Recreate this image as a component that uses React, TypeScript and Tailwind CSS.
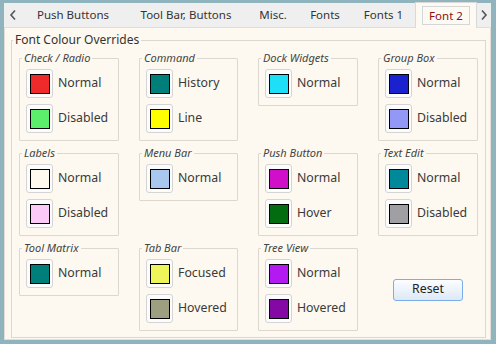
import React from "react";

type Item = { swatch: string; label: string };
type Box = { title: string; items: Item[] };

const rows: (Box | "reset")[][] = [
  [
    { title: "Check / Radio", items: [ { swatch: "bg-[#ee2a2a]", label: "Normal" }, { swatch: "bg-[#5bef6b]", label: "Disabled" } ] },
    { title: "Command", items: [ { swatch: "bg-[#007f7a]", label: "History" }, { swatch: "bg-[#ffff00]", label: "Line" } ] },
    { title: "Dock Widgets", items: [ { swatch: "bg-[#1edff8]", label: "Normal" } ] },
    { title: "Group Box", items: [ { swatch: "bg-[#1a22d0]", label: "Normal" }, { swatch: "bg-[#9397f5]", label: "Disabled" } ] },
  ],
  [
    { title: "Labels", items: [ { swatch: "bg-[#fffaf0]", label: "Normal" }, { swatch: "bg-[#fccaf7]", label: "Disabled" } ] },
    { title: "Menu Bar", items: [ { swatch: "bg-[#a8c8f0]", label: "Normal" } ] },
    { title: "Push Button", items: [ { swatch: "bg-[#d010c8]", label: "Normal" }, { swatch: "bg-[#046c10]", label: "Hover" } ] },
    { title: "Text Edit", items: [ { swatch: "bg-[#00899a]", label: "Normal" }, { swatch: "bg-[#a0a0a4]", label: "Disabled" } ] },
  ],
  [
    { title: "Tool Matrix", items: [ { swatch: "bg-[#007f7a]", label: "Normal" } ] },
    { title: "Tab Bar", items: [ { swatch: "bg-[#eef55a]", label: "Focused" }, { swatch: "bg-[#9e9e80]", label: "Hovered" } ] },
    { title: "Tree View", items: [ { swatch: "bg-[#b31af2]", label: "Normal" }, { swatch: "bg-[#8408a3]", label: "Hovered" } ] },
    "reset",
  ],
];

function ColourBox({ box }: { box: Box }) {
  return (
    <fieldset className="self-start border border-[#dcd8d0] rounded-[1px] min-w-0">
      <legend className="ml-[2px] px-[2px] text-[11px] leading-[14px] italic text-[#444]">{box.title}</legend>
      <div className="pl-[6px] pt-[4px] pb-[7px] flex flex-col gap-[6px]">
        {box.items.map((it) => (
          <div key={it.label} className="flex items-center gap-[5px]">
            <div className="w-[27px] h-[29px] rounded-[3px] border border-[#d4d4d4] bg-[#fcfcfc] flex items-center justify-center">
              <div className={`w-[20px] h-[20px] border border-black ${it.swatch}`} />
            </div>
            <span className="text-[12.3px] text-[#3a3a3a]">{it.label}</span>
          </div>
        ))}
      </div>
    </fieldset>
  );
}

const tabs = [
  { label: "Push Buttons", w: "w-[102px]" },
  { label: "Tool Bar, Buttons", w: "w-[124px]" },
  { label: "Misc.", w: "w-[50px]" },
  { label: "Fonts", w: "w-[54px]" },
  { label: "Fonts 1", w: "w-[63px]" },
];

export default function App() {
  return (
    <div className="w-[496px] h-[344px] bg-[#8fb4bd] pt-[3px] pl-[4px] pr-[5px] pb-[4px] flex flex-col font-['Noto_Sans',sans-serif] text-[#333]">
      <div className="h-[24px] shrink-0 bg-[#efefef] flex items-stretch text-[11.5px]">
        <div className="w-[18px] flex items-center justify-center">
          <svg width="8" height="12" viewBox="0 0 8 12">
            <polyline points="6,1.5 2,6 6,10.5" fill="none" stroke="#555" strokeWidth="1.6" />
          </svg>
        </div>
        {tabs.map((t) => (
          <div key={t.label} className={`${t.w} flex items-center justify-center text-[#333]`}>{t.label}</div>
        ))}
        <div className="relative z-10 w-[62px] -mt-[1px] h-[26px] bg-[#fdfaf3] border border-b-0 border-[#d9d9d9] flex items-center justify-center">
          <div className="w-[48px] h-[19px] border border-[#d6d6d6] flex items-center justify-center text-[#8b1010]">Font 2</div>
        </div>
        <div className="flex-1 flex items-center justify-center">
          <svg width="8" height="12" viewBox="0 0 8 12">
            <polyline points="2,1.5 6,6 2,10.5" fill="none" stroke="#555" strokeWidth="1.6" />
          </svg>
        </div>
      </div>
      <div className="flex-1 bg-[#fdf9f0] border border-[#e2ded6] pl-[6px] pr-[4px] pt-[4px] pb-[1px] flex">
        <fieldset className="flex-1 border border-[#dcd8d0] min-w-0">
          <legend className="ml-[1px] px-[2px] text-[12px] leading-[16px] text-[#333]">Font Colour Overrides</legend>
          <div className="pl-[7px] pt-[3px] grid grid-cols-[100px_99px_100px_100px] gap-x-[20px] gap-y-[5px]">
            {rows.flat().map((b, i) =>
              b === "reset" ? (
                <div key={i} className="flex items-center justify-center pt-[7px]">
                  <button className="w-[70px] h-[22px] rounded-[3px] border border-[#7aaee8] bg-gradient-to-b from-[#fbfdff] to-[#dde9f6] text-[12.3px] text-[#222]">Reset</button>
                </div>
              ) : (
                <ColourBox key={i} box={b} />
              )
            )}
          </div>
        </fieldset>
      </div>
    </div>
  );
}
